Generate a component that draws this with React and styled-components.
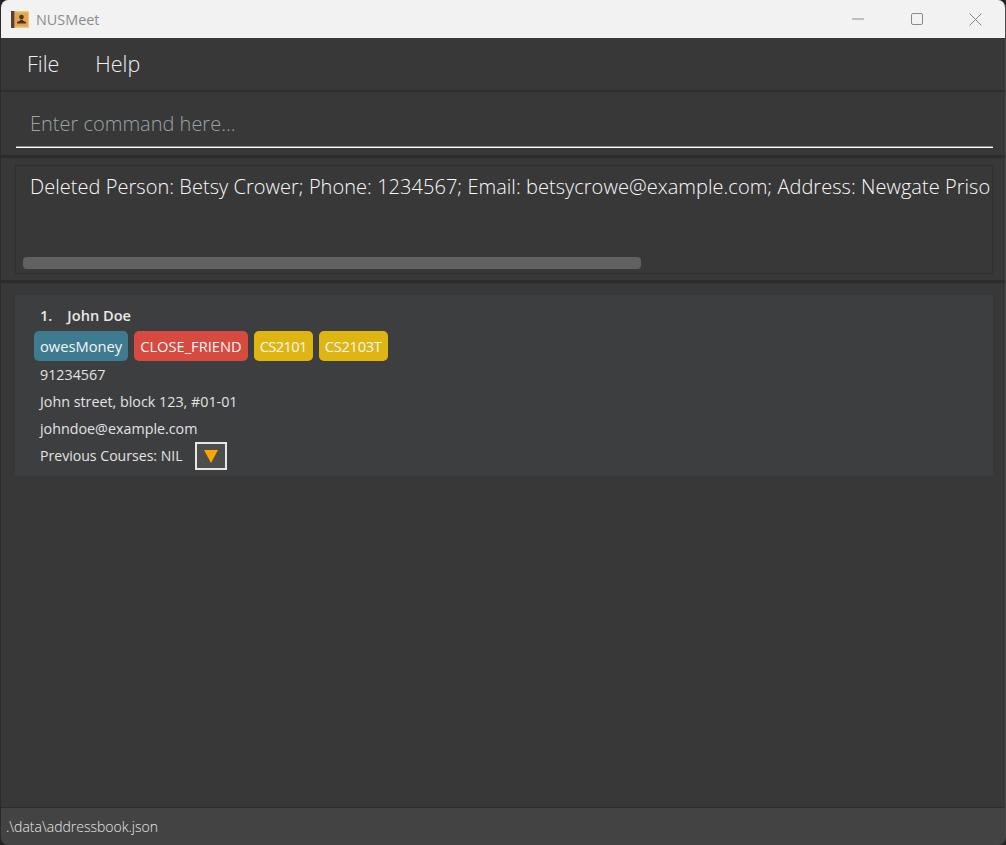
import React from 'react'
import styled, { createGlobalStyle } from 'styled-components'

const Global = createGlobalStyle`
  html, body { margin: 0; padding: 0; background: #232323; }
  body { font-family: "Open Sans", "Noto Sans", sans-serif; }
`

const Window = styled.div`
  width: 1006px;
  height: 845px;
  display: flex;
  flex-direction: column;
  background: #383838;
  border-radius: 8px;
  overflow: hidden;
  border-left: 1px solid #2b2b2b;
  border-right: 1px solid #4a4a4a;
  box-sizing: border-box;
`

const TitleBar = styled.div`
  height: 38px;
  flex: none;
  display: flex;
  align-items: center;
  background: #f2f2f2;
  padding-left: 10px;
`

const AppName = styled.span`
  margin-left: 7px;
  font-size: 14.4px;
  color: #8c8c8c;
`

const WinButtons = styled.div`
  margin-left: auto;
  display: flex;
`

const WinButton = styled.div`
  width: 59px;
  height: 38px;
  display: flex;
  align-items: center;
  justify-content: center;
`

const MenuBar = styled.div`
  height: 54px;
  flex: none;
  box-sizing: border-box;
  display: flex;
  align-items: center;
  gap: 36px;
  padding: 0 0 2px 26px;
  border-bottom: 2px solid #2e2e2e;
`

const MenuItem = styled.span`
  font-size: 21.5px;
  font-weight: 300;
  color: #f0f0f0;
`

const CommandPane = styled.div`
  height: 66px;
  flex: none;
  box-sizing: border-box;
  padding: 0 12px 7px 15px;
  display: flex;
  border-bottom: 3px solid #2c2c2c;
`

const CommandInput = styled.div`
  flex: 1;
  display: flex;
  align-items: center;
  padding: 7px 0 0 14px;
  border-bottom: 1px solid #ffffff;
  box-shadow: inset 0 -1px 0 #8a8a8a;
  font-size: 20px;
  font-weight: 300;
  color: #9aa3a8;
`

const ResultPane = styled.div`
  height: 125px;
  flex: none;
  box-sizing: border-box;
  padding: 7px 12px 6px 14px;
  display: flex;
  border-bottom: 3px solid #2c2c2c;
`

const ResultBox = styled.div`
  flex: 1;
  min-width: 0;
  position: relative;
  overflow: hidden;
  border: 1px solid #2f2f2f;
  padding: 7px 0 0 14px;
  font-size: 20px;
  font-weight: 300;
  letter-spacing: 0.04px;
  color: #fafafa;
  white-space: nowrap;
`

const ScrollThumb = styled.div`
  position: absolute;
  left: 7px;
  bottom: 4px;
  width: 618px;
  height: 12px;
  border-radius: 4px;
  background: #616161;
`

const ListPane = styled.div`
  flex: 1;
  padding: 12px 12px 0 14px;
`

const Card = styled.div`
  height: 181px;
  box-sizing: border-box;
  background: #3c3e3f;
  padding: 9px 0 0 19px;
  display: flex;
  flex-direction: column;
`

const NameRow = styled.div`
  display: flex;
  gap: 15px;
  padding-left: 6px;
  font-size: 14.6px;
  font-weight: 600;
  line-height: 22px;
  color: #e8e8e8;
`

const Tags = styled.div`
  display: flex;
  gap: 6px;
  margin-top: 5px;
`

const Tag = styled.span`
  height: 30px;
  box-sizing: border-box;
  padding: 0 6px 1px;
  display: flex;
  align-items: center;
  border-radius: 5px;
  font-size: 14.7px;
  letter-spacing: ${p => p.$spacing || '0'};
  color: #f5f5f5;
  background: ${p => p.$bg};
`

const Field = styled.div`
  padding-left: 6px;
  font-size: 14.3px;
  line-height: 27px;
  color: #e3e3e3;
`

const CourseRow = styled.div`
  display: flex;
  align-items: center;
  padding-left: 6px;
  font-size: 14.1px;
  line-height: 22px;
  color: #e3e3e3;
`

const Toggle = styled.div`
  width: 32px;
  height: 28px;
  box-sizing: border-box;
  margin-left: 12px;
  border: 2px solid #e6e6e6;
  background: #4d4d4d;
  display: flex;
  align-items: center;
  justify-content: center;
`

const StatusBar = styled.div`
  height: 38px;
  flex: none;
  box-sizing: border-box;
  display: flex;
  align-items: center;
  padding-left: 5px;
  background: #434343;
  border-top: 1px solid #2c2c2c;
  font-size: 14px;
  font-weight: 300;
  color: #e8e8e8;
`

const BookIcon = () => (
  <svg width="18" height="17" viewBox="0 0 18 17">
    <rect x="0" y="0" width="18" height="17" fill="#f2c67e" />
    <rect x="4" y="1.5" width="13" height="14" fill="#e3a44f" />
    <rect x="0" y="0" width="3.5" height="17" fill="#5a4030" />
    <circle cx="10.5" cy="6" r="2.3" fill="#4a3520" />
    <path d="M6 12.5h9v-1.4l-3-1.4v-1h-3v1l-3 1.4z" fill="#4a3520" />
  </svg>
)

export default function App() {
  return (
    <>
      <Global />
      <Window>
        <TitleBar>
          <BookIcon />
          <AppName>NUSMeet</AppName>
          <WinButtons>
            <WinButton>
              <svg width="12" height="12" viewBox="0 0 12 12"><path d="M0 6h12" stroke="#8a8a8a" /></svg>
            </WinButton>
            <WinButton>
              <svg width="12" height="12" viewBox="0 0 12 12"><rect x=".5" y=".5" width="11" height="11" rx="1.5" fill="none" stroke="#8a8a8a" /></svg>
            </WinButton>
            <WinButton>
              <svg width="13" height="13" viewBox="0 0 13 13"><path d="M.5.5l12 12M12.5.5l-12 12" stroke="#8a8a8a" /></svg>
            </WinButton>
          </WinButtons>
        </TitleBar>
        <MenuBar>
          <MenuItem>File</MenuItem>
          <MenuItem>Help</MenuItem>
        </MenuBar>
        <CommandPane>
          <CommandInput>Enter command here...</CommandInput>
        </CommandPane>
        <ResultPane>
          <ResultBox>
            Deleted Person: Betsy Crower; Phone: 1234567; Email: betsycrowe@example.com; Address: Newgate Priso
            <ScrollThumb />
          </ResultBox>
        </ResultPane>
        <ListPane>
          <Card>
            <NameRow><span>1.</span><span>John Doe</span></NameRow>
            <Tags>
              <Tag $bg="#3e7b91">owesMoney</Tag>
              <Tag $bg="#d64a3f">CLOSE_FRIEND</Tag>
              <Tag $bg="#dfb512" $spacing="-0.65px">CS2101</Tag>
              <Tag $bg="#dfb512" $spacing="-0.3px">CS2103T</Tag>
            </Tags>
            <Field>91234567</Field>
            <Field>John street, block 123, #01-01</Field>
            <Field>johndoe@example.com</Field>
            <CourseRow>
              Previous Courses: NIL
              <Toggle>
                <svg width="14" height="13" viewBox="0 0 14 13"><path d="M0 0h14L7 13z" fill="#ffa500" /></svg>
              </Toggle>
            </CourseRow>
          </Card>
        </ListPane>
        <StatusBar>.\data\addressbook.json</StatusBar>
      </Window>
    </>
  )
}
